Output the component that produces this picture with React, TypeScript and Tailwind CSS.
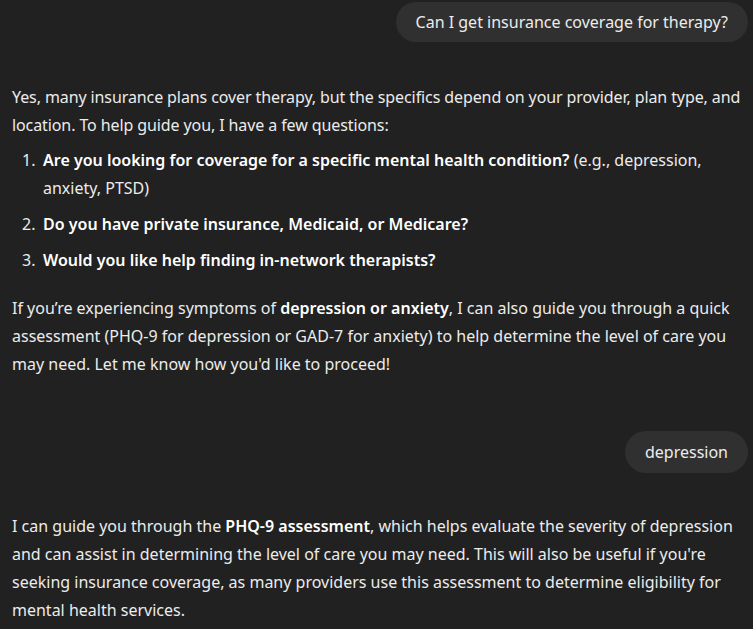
export default function App() {
  return (
    <div
      className="min-h-[629px] bg-[#212121] text-[#ececec] text-[16px] leading-[28px] pl-3 pr-[5px] pt-[2px]"
      style={{ fontFamily: '"Noto Sans", "Open Sans", sans-serif' }}
    >
      {/* User message */}
      <div className="flex justify-end">
        <div className="bg-[#303030] rounded-3xl px-5 py-[6px]">Can I get insurance coverage for therapy?</div>
      </div>

      {/* Assistant reply */}
      <div className="mt-[41px]">
        <p className="tracking-[-0.1px] -mr-[5px]">
          Yes, many insurance plans cover therapy, but the specifics depend on your provider, plan type, and location.
          To help guide you, I have a few questions:
        </p>
        <ol className="mt-[7px] pl-[10px] space-y-2">
          <li className="flex">
            <span className="w-[21px] shrink-0">1.</span>
            <span>
              <strong className="font-semibold text-white">Are you looking for coverage for a specific mental health condition?</strong>{" "}
              (e.g., depression, anxiety, PTSD)
            </span>
          </li>
          <li className="flex">
            <span className="w-[21px] shrink-0">2.</span>
            <strong className="font-semibold text-white">Do you have private insurance, Medicaid, or Medicare?</strong>
          </li>
          <li className="flex">
            <span className="w-[21px] shrink-0">3.</span>
            <strong className="font-semibold text-white">Would you like help finding in-network therapists?</strong>
          </li>
        </ol>
        <p className="mt-5">
          If you’re experiencing symptoms of <strong className="font-semibold text-white">depression or anxiety</strong>, I
          can also guide you through a quick assessment (PHQ-9 for depression or GAD-7 for anxiety) to help determine the
          level of care you may need. Let me know how you'd like to proceed!
        </p>
      </div>

      {/* User message */}
      <div className="flex justify-end mt-[53px]">
        <div className="bg-[#303030] rounded-3xl px-5 py-[7px]">depression</div>
      </div>

      {/* Assistant reply */}
      <div className="mt-[39px]">
        <p>
          I can guide you through the <strong className="font-semibold text-white">PHQ-9 assessment</strong>, which helps
          evaluate the severity of depression and can assist in determining the level of care you may need. This will also
          be useful if you're seeking insurance coverage, as many providers use this assessment to determine eligibility for
          mental health services.
        </p>
      </div>
    </div>
  );
}
